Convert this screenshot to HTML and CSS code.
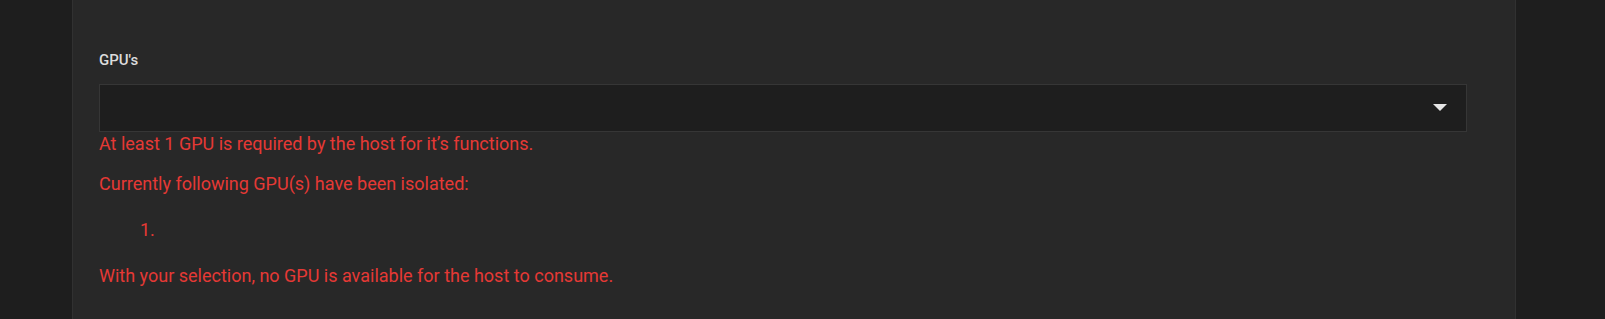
FILE: index.html
```html
<!DOCTYPE html>
<html lang="en">
<head>
<meta charset="utf-8">
<title>GPU settings</title>
<link rel="stylesheet" href="styles.css">
</head>
<body>
<div class="page">
  <section class="panel">
    <label class="field-label">GPU's</label>
    <div class="select" role="combobox" aria-expanded="false">
      <span class="select-arrow"></span>
    </div>
    <div class="errors">
      <p class="error first">At least 1 GPU is required by the host for it’s functions.</p>
      <p class="error">Currently following GPU(s) have been isolated:</p>
      <ol class="error-list">
        <li></li>
      </ol>
      <p class="error last">With your selection, no GPU is available for the host to consume.</p>
    </div>
  </section>
</div>
</body>
</html>
```

FILE: styles.css
```css
html, body {
  margin: 0;
  padding: 0;
  background: #1e1e1e;
  height: 100%;
}

.page {
  height: 100%;
  display: flex;
  padding-left: 72px;
  box-sizing: border-box;
}

.panel {
  width: 1444px;
  box-sizing: border-box;
  background: #282828;
  border-left: 1px solid #313131;
  border-right: 1px solid #313131;
  padding: 52px 48px 0 26px;
  display: flex;
  flex-direction: column;
}

.field-label {
  font-family: Roboto, "Liberation Sans", sans-serif;
  font-weight: 500;
  font-size: 15px;
  line-height: 16px;
  color: #dcdcdc;
  margin-bottom: 16px;
}

.select {
  height: 48px;
  box-sizing: border-box;
  background: #1e1e1e;
  border: 1px solid #363636;
  display: flex;
  align-items: center;
  justify-content: flex-end;
  padding-right: 19px;
}

.select-arrow {
  width: 0;
  height: 0;
  border-left: 7px solid transparent;
  border-right: 7px solid transparent;
  border-top: 7px solid #e6e6e6;
  margin-top: -1px;
}

.errors {
  font-family: Roboto, "Liberation Sans", sans-serif;
  font-size: 18px;
  line-height: 24px;
  color: #e53935;
}

.error {
  margin: 16px 0 0;
}

.error.first {
  margin-top: 0;
}

.error-list {
  margin: 22px 0 0;
  padding-left: 41px;
  list-style-position: inside;
  list-style-type: decimal;
}

.error-list li {
  height: 24px;
}

.error.last {
  margin-top: 22px;
}
```
